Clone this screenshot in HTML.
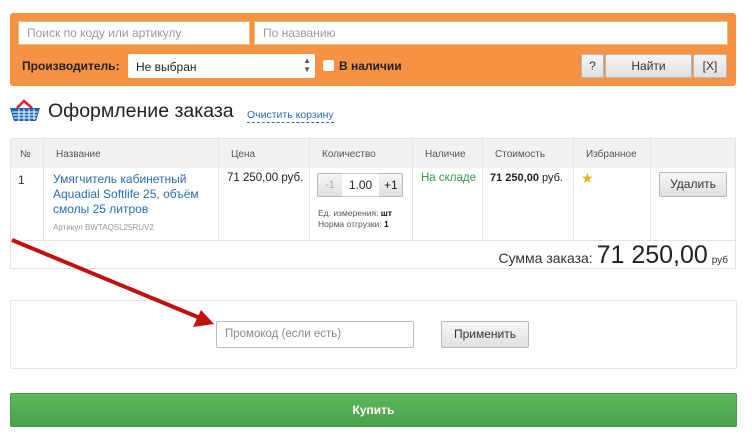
<!DOCTYPE html>
<html><head><meta charset="utf-8"><style>
*{box-sizing:border-box;margin:0;padding:0}
body{width:752px;height:440px;background:#fff;font-family:"Liberation Sans","DejaVu Sans",sans-serif;position:relative;overflow:hidden;color:#333}
.a{position:absolute}
.inp{background:#fff;border:1px solid #e8c070;font-size:12px;color:#999;padding:5px 8px;line-height:12px}
.btn{background:linear-gradient(#f6f6f6,#e0e0e0);border:1px solid #b8b8b8;border-radius:2px;font-size:12px;color:#333;text-align:center}
.th{font-size:10px;color:#555;top:149px}
.vl{position:absolute;top:138px;height:102px;width:1px;background:#e4e4e4}
</style></head><body>
<div class="a" style="left:10px;top:13px;width:726px;height:73px;background:#f79245;border-radius:3px"></div>
<div class="a inp" style="left:18px;top:21px;width:232px;height:24px">Поиск по коду или артикулу</div>
<div class="a inp" style="left:254px;top:21px;width:474px;height:24px">По названию</div>
<div class="a" style="left:22px;top:59px;font-size:12px;font-weight:bold;color:#222">Производитель:</div>
<div class="a" style="left:128px;top:54px;width:187px;height:24px;background:#fff;border-radius:2px;font-size:12px;color:#222;padding:6px 8px">Не выбран<span style="position:absolute;right:4px;top:2px;font-size:8px;line-height:9px;color:#555">▲<br>▼</span></div>
<div class="a" style="left:323px;top:60px;width:11px;height:11px;background:#fff;border-radius:2px"></div>
<div class="a" style="left:339px;top:59px;font-size:12px;font-weight:bold;color:#222">В наличии</div>
<div class="a btn" style="left:581px;top:54px;width:23px;height:24px;line-height:22px">?</div>
<div class="a btn" style="left:605px;top:54px;width:87px;height:24px;line-height:22px">Найти</div>
<div class="a btn" style="left:693px;top:54px;width:34px;height:24px;line-height:22px">[X]</div>

<svg class="a" style="left:9px;top:98px" width="32" height="24" viewBox="0 0 32 24">
<path d="M8 10 L15 3 L23 10" stroke="#e02020" stroke-width="2.5" fill="none"/>
<path d="M1 10 H31 L27 23 H5 Z" fill="#1e63b8"/>
<g stroke="#fff" stroke-width="1"><path d="M3 14H29M4 17H28M5 20H27M10 11V23M15 11V23M20 11V23M25 11V22"/></g>
</svg>
<div class="a" style="left:48px;top:100px;font-size:19.5px;color:#222">Оформление заказа</div>
<div class="a" style="left:247px;top:109px;font-size:10.5px;color:#2a6db5;border-bottom:1px dashed #2a6db5;line-height:13px">Очистить корзину</div>

<div class="a" style="left:10px;top:138px;width:726px;height:131px;border:1px solid #e4e4e4"></div>
<div class="a" style="left:11px;top:139px;width:724px;height:29px;background:#f1f1f1"></div>
<div class="a" style="left:11px;top:240px;width:724px;height:1px;background:#e4e4e4"></div>
<div class="vl" style="left:43px"></div><div class="vl" style="left:218px"></div><div class="vl" style="left:309px"></div><div class="vl" style="left:412px"></div><div class="vl" style="left:482px"></div><div class="vl" style="left:573px"></div><div class="vl" style="left:650px"></div>
<div class="a th" style="left:20px">№</div>
<div class="a th" style="left:56px">Название</div>
<div class="a th" style="left:231px">Цена</div>
<div class="a th" style="left:322px">Количество</div>
<div class="a th" style="left:425px">Наличие</div>
<div class="a th" style="left:495px">Стоимость</div>
<div class="a th" style="left:586px">Избранное</div>
<div class="a" style="left:18px;top:173px;font-size:12px">1</div>
<div class="a" style="left:53px;top:172px;font-size:12px;line-height:15px;color:#2a6db5;width:160px">Умягчитель кабинетный Aquadial Softlife 25, объём смолы 25 литров</div>
<div class="a" style="left:53px;top:223px;font-size:8px;color:#999">Артикул BWTAQSL25RUV2</div>
<div class="a" style="left:227px;top:172px;font-size:11.5px;color:#222">71 250,00 руб.</div>
<div class="a btn" style="left:317px;top:173px;width:86px;height:24px"></div>
<div class="a" style="left:325px;top:179px;font-size:11px;color:#aaa">-1</div>
<div class="a" style="left:342px;top:173px;width:37px;height:24px;background:#fff;border-top:1px solid #ccc;border-bottom:1px solid #ccc;font-size:12px;text-align:center;line-height:22px;color:#222">1.00</div>
<div class="a" style="left:384px;top:178px;font-size:12px;color:#222">+1</div>
<div class="a" style="left:318px;top:208px;font-size:8.5px;line-height:11px;color:#555">Ед. измерения: <b style="color:#111">шт</b><br>Норма отгрузки: <b style="color:#111">1</b></div>
<div class="a" style="left:421px;top:172px;font-size:11.5px;color:#3c9a4a">На складе</div>
<div class="a" style="left:490px;top:172px;font-size:11px;color:#222"><b>71 250,00</b> руб.</div>
<div class="a" style="left:581px;top:170px;font-size:14px;color:#f0b020">★</div>
<div class="a btn" style="left:659px;top:172px;width:68px;height:25px;line-height:23px;font-size:12px">Удалить</div>
<div class="a" style="right:24px;top:241px;font-size:14px;color:#333;white-space:nowrap;text-align:right">Сумма заказа: <span style="font-size:25px;color:#222">71 250,00</span> <span style="font-size:10px">руб</span></div>

<div class="a" style="left:10px;top:300px;width:727px;height:69px;border:1px solid #e6e6e6;border-radius:2px"></div>
<div class="a" style="left:216px;top:321px;width:198px;height:27px;border:1px solid #bbb;border-radius:2px;font-size:11.5px;color:#888;padding:0 8px;line-height:25px">Промокод (если есть)</div>
<div class="a btn" style="left:441px;top:321px;width:88px;height:27px;line-height:25px">Применить</div>
<svg class="a" style="left:0;top:230px" width="230" height="110"><path d="M12 10 L200 88" stroke="#c01010" stroke-width="4"/><path d="M214 94 L193 97 L201 80 Z" fill="#c01010"/></svg>

<div class="a" style="left:10px;top:393px;width:727px;height:34px;background:linear-gradient(#5cb85c,#4ca14c);border:1px solid #45974a;border-radius:2px;color:#fff;font-weight:bold;font-size:12px;text-align:center;line-height:32px">Купить</div>
</body></html>
